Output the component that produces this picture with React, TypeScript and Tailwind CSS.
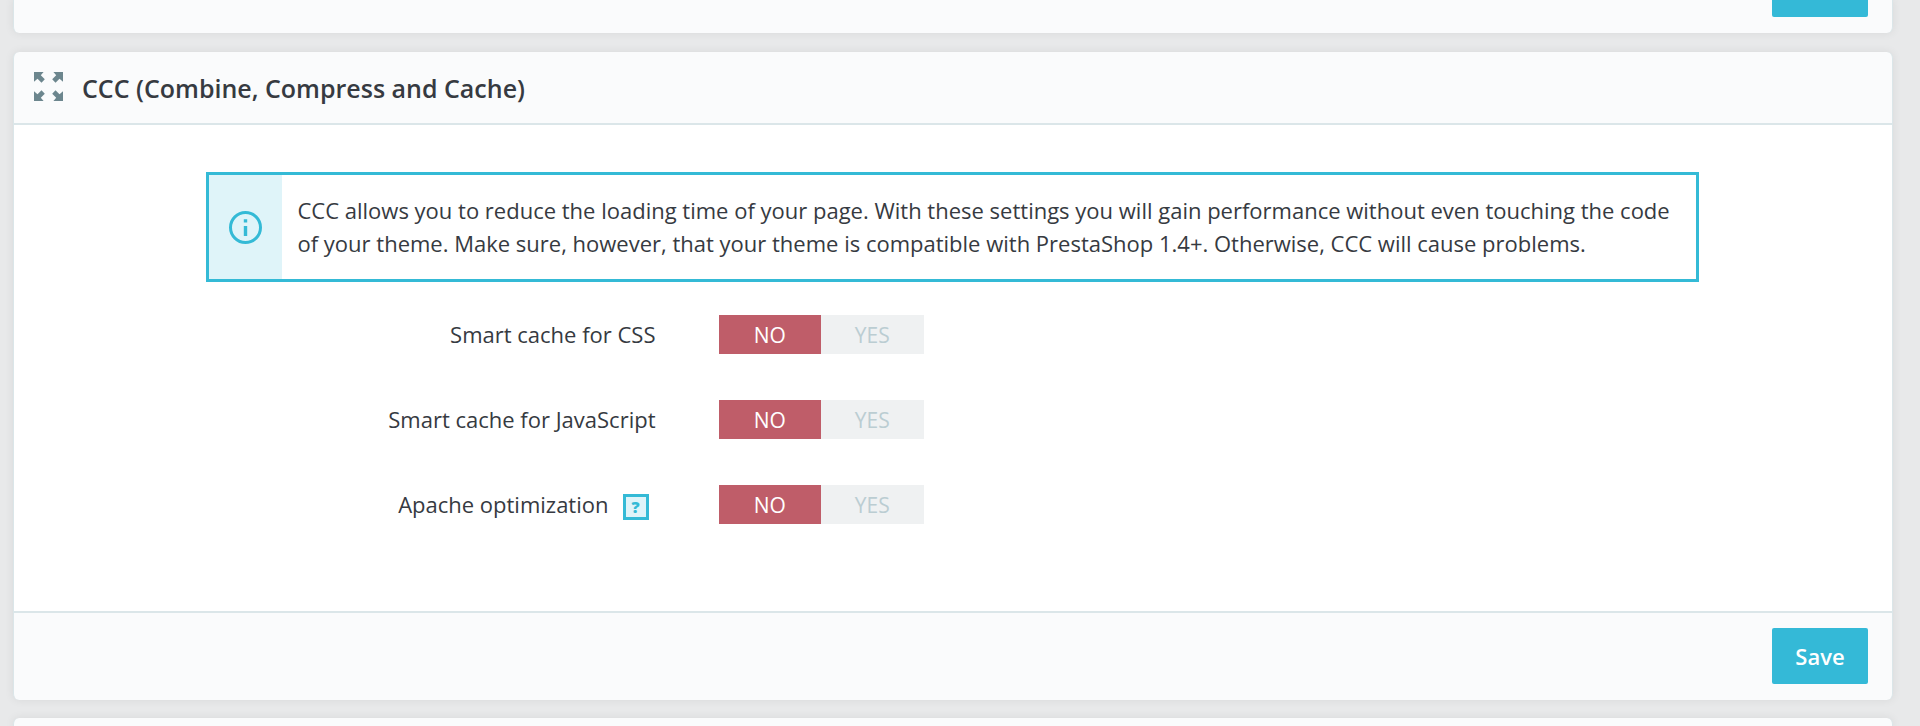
import { useState } from "react";

const card =
  "border-x border-[#dbe6e9] bg-[#fafbfc] shadow-[0_0_8px_1px_rgba(0,0,0,0.06)]";

function CompressIcon() {
  return (
    <svg className="mb-0.5 h-[29px] w-[29px] shrink-0" viewBox="0 0 29 29" fill="#6c868e" aria-hidden="true">
      <path d="M0 0h9.6L6.8 3.2l4 4-3.3 3.5-4-4L0 9.8z" />
      <path d="M29 0h-9.6l2.8 3.2-4 4 3.3 3.5 4-4L29 9.8z" />
      <path d="M0 29h9.6l-2.8-3.2 4-4-3.3-3.5-4 4L0 19.2z" />
      <path d="M29 29h-9.6l2.8-3.2-4-4 3.3-3.5 4 4L29 19.2z" />
    </svg>
  );
}

function InfoIcon() {
  return (
    <svg className="h-[33px] w-[33px]" viewBox="0 0 33 33" fill="none" aria-hidden="true">
      <circle cx="16.5" cy="16.5" r="15" stroke="#34bad6" strokeWidth="3" />
      <path d="M16.5 8.2v3.2M16.5 15v10" stroke="#34bad6" strokeWidth="3.4" />
    </svg>
  );
}

type Option = { id: string; label: string; help?: boolean };

const options: Option[] = [
  { id: "css", label: "Smart cache for CSS" },
  { id: "js", label: "Smart cache for JavaScript" },
  { id: "apache", label: "Apache optimization", help: true },
];

function Toggle({ id }: { id: string }) {
  const [value, setValue] = useState(false);
  return (
    <div className="flex w-[205px]" role="radiogroup" aria-labelledby={`${id}-label`}>
      {[false, true].map((v) => {
        const on = value === v;
        const tone = on
          ? v
            ? "bg-[#70b580] text-white"
            : "bg-[#bf5d69] text-white"
          : "bg-[#eff1f2] text-[#bbcdd2]";
        return (
          <label
            key={String(v)}
            htmlFor={`${id}-${v}`}
            className={`relative flex h-[39px] flex-1 cursor-pointer items-center justify-center text-[21px] leading-[38px] ${tone}`}
          >
            <input
              id={`${id}-${v}`}
              type="radio"
              name={id}
              checked={on}
              onChange={() => setValue(v)}
              className="absolute inset-0 cursor-pointer appearance-none"
            />
            {v ? "YES" : "NO"}
          </label>
        );
      })}
    </div>
  );
}

export default function App() {
  return (
    <div className="overflow-hidden bg-[#e8e9ea] pr-[27px] pl-[13px] font-['Open_Sans',sans-serif] text-[22px] text-[#363a41]">
      <section className={`${card} flex justify-end rounded-b-md px-6 pb-4`}>
        <button type="button" aria-label="Save" className="h-[17px] w-24 rounded-b-xs bg-[#34b9d7]" />
      </section>

      <section className={`${card} mt-[19px] rounded-md`}>
        <header className="flex h-[73px] items-center gap-[19px] border-b-2 border-[#dbe6e9] px-5">
          <CompressIcon />
          <h3 className="text-[25px] leading-[34px] font-semibold">CCC (Combine, Compress and Cache)</h3>
        </header>

        <div className="bg-white pt-[47px] pb-[87px]">
          <div className="mx-auto w-10/12 pr-[37px] pl-[35px]">
            <div role="note" className="flex border-[3px] border-[#34bad6]">
              <div className="flex w-[73px] shrink-0 items-center justify-center bg-[#dff4f9]">
                <InfoIcon />
              </div>
              <p className="px-4 py-[19px] leading-[33px]">
                CCC allows you to reduce the loading time of your page. With these settings you will gain
                performance without even touching the code of your theme. Make sure, however, that your theme
                is compatible with PrestaShop 1.4+. Otherwise, CCC will cause problems.
              </p>
            </div>

            <div className="mt-[33px] flex flex-col gap-[46px]">
              {options.map((o) => (
                <div key={o.id} className="flex items-center">
                  <div className="mr-[63px] flex w-[450px] items-center justify-end gap-3.5">
                    <span id={`${o.id}-label`} className="leading-[33px]">
                      {o.label}
                    </span>
                    {o.help && (
                      <button
                        type="button"
                        className="mt-1 mr-[7px] flex h-[26px] w-[26px] items-center justify-center border-[3px] border-[#34bad6] bg-[#dff4f9] text-[16px] leading-5 font-extrabold text-[#34bad6]"
                      >
                        ?
                      </button>
                    )}
                  </div>
                  <Toggle id={o.id} />
                </div>
              ))}
            </div>
          </div>
        </div>

        <footer className="flex justify-end rounded-b-md border-t-2 border-[#dbe6e9] px-6 pt-[15px] pb-4">
          <button
            type="button"
            className="h-14 w-24 rounded-xs bg-[#34b9d7] text-[22px] font-semibold text-white"
          >
            Save
          </button>
        </footer>
      </section>

      <section className={`${card} mt-[18px] h-2 rounded-t-md`} />
    </div>
  );
}
